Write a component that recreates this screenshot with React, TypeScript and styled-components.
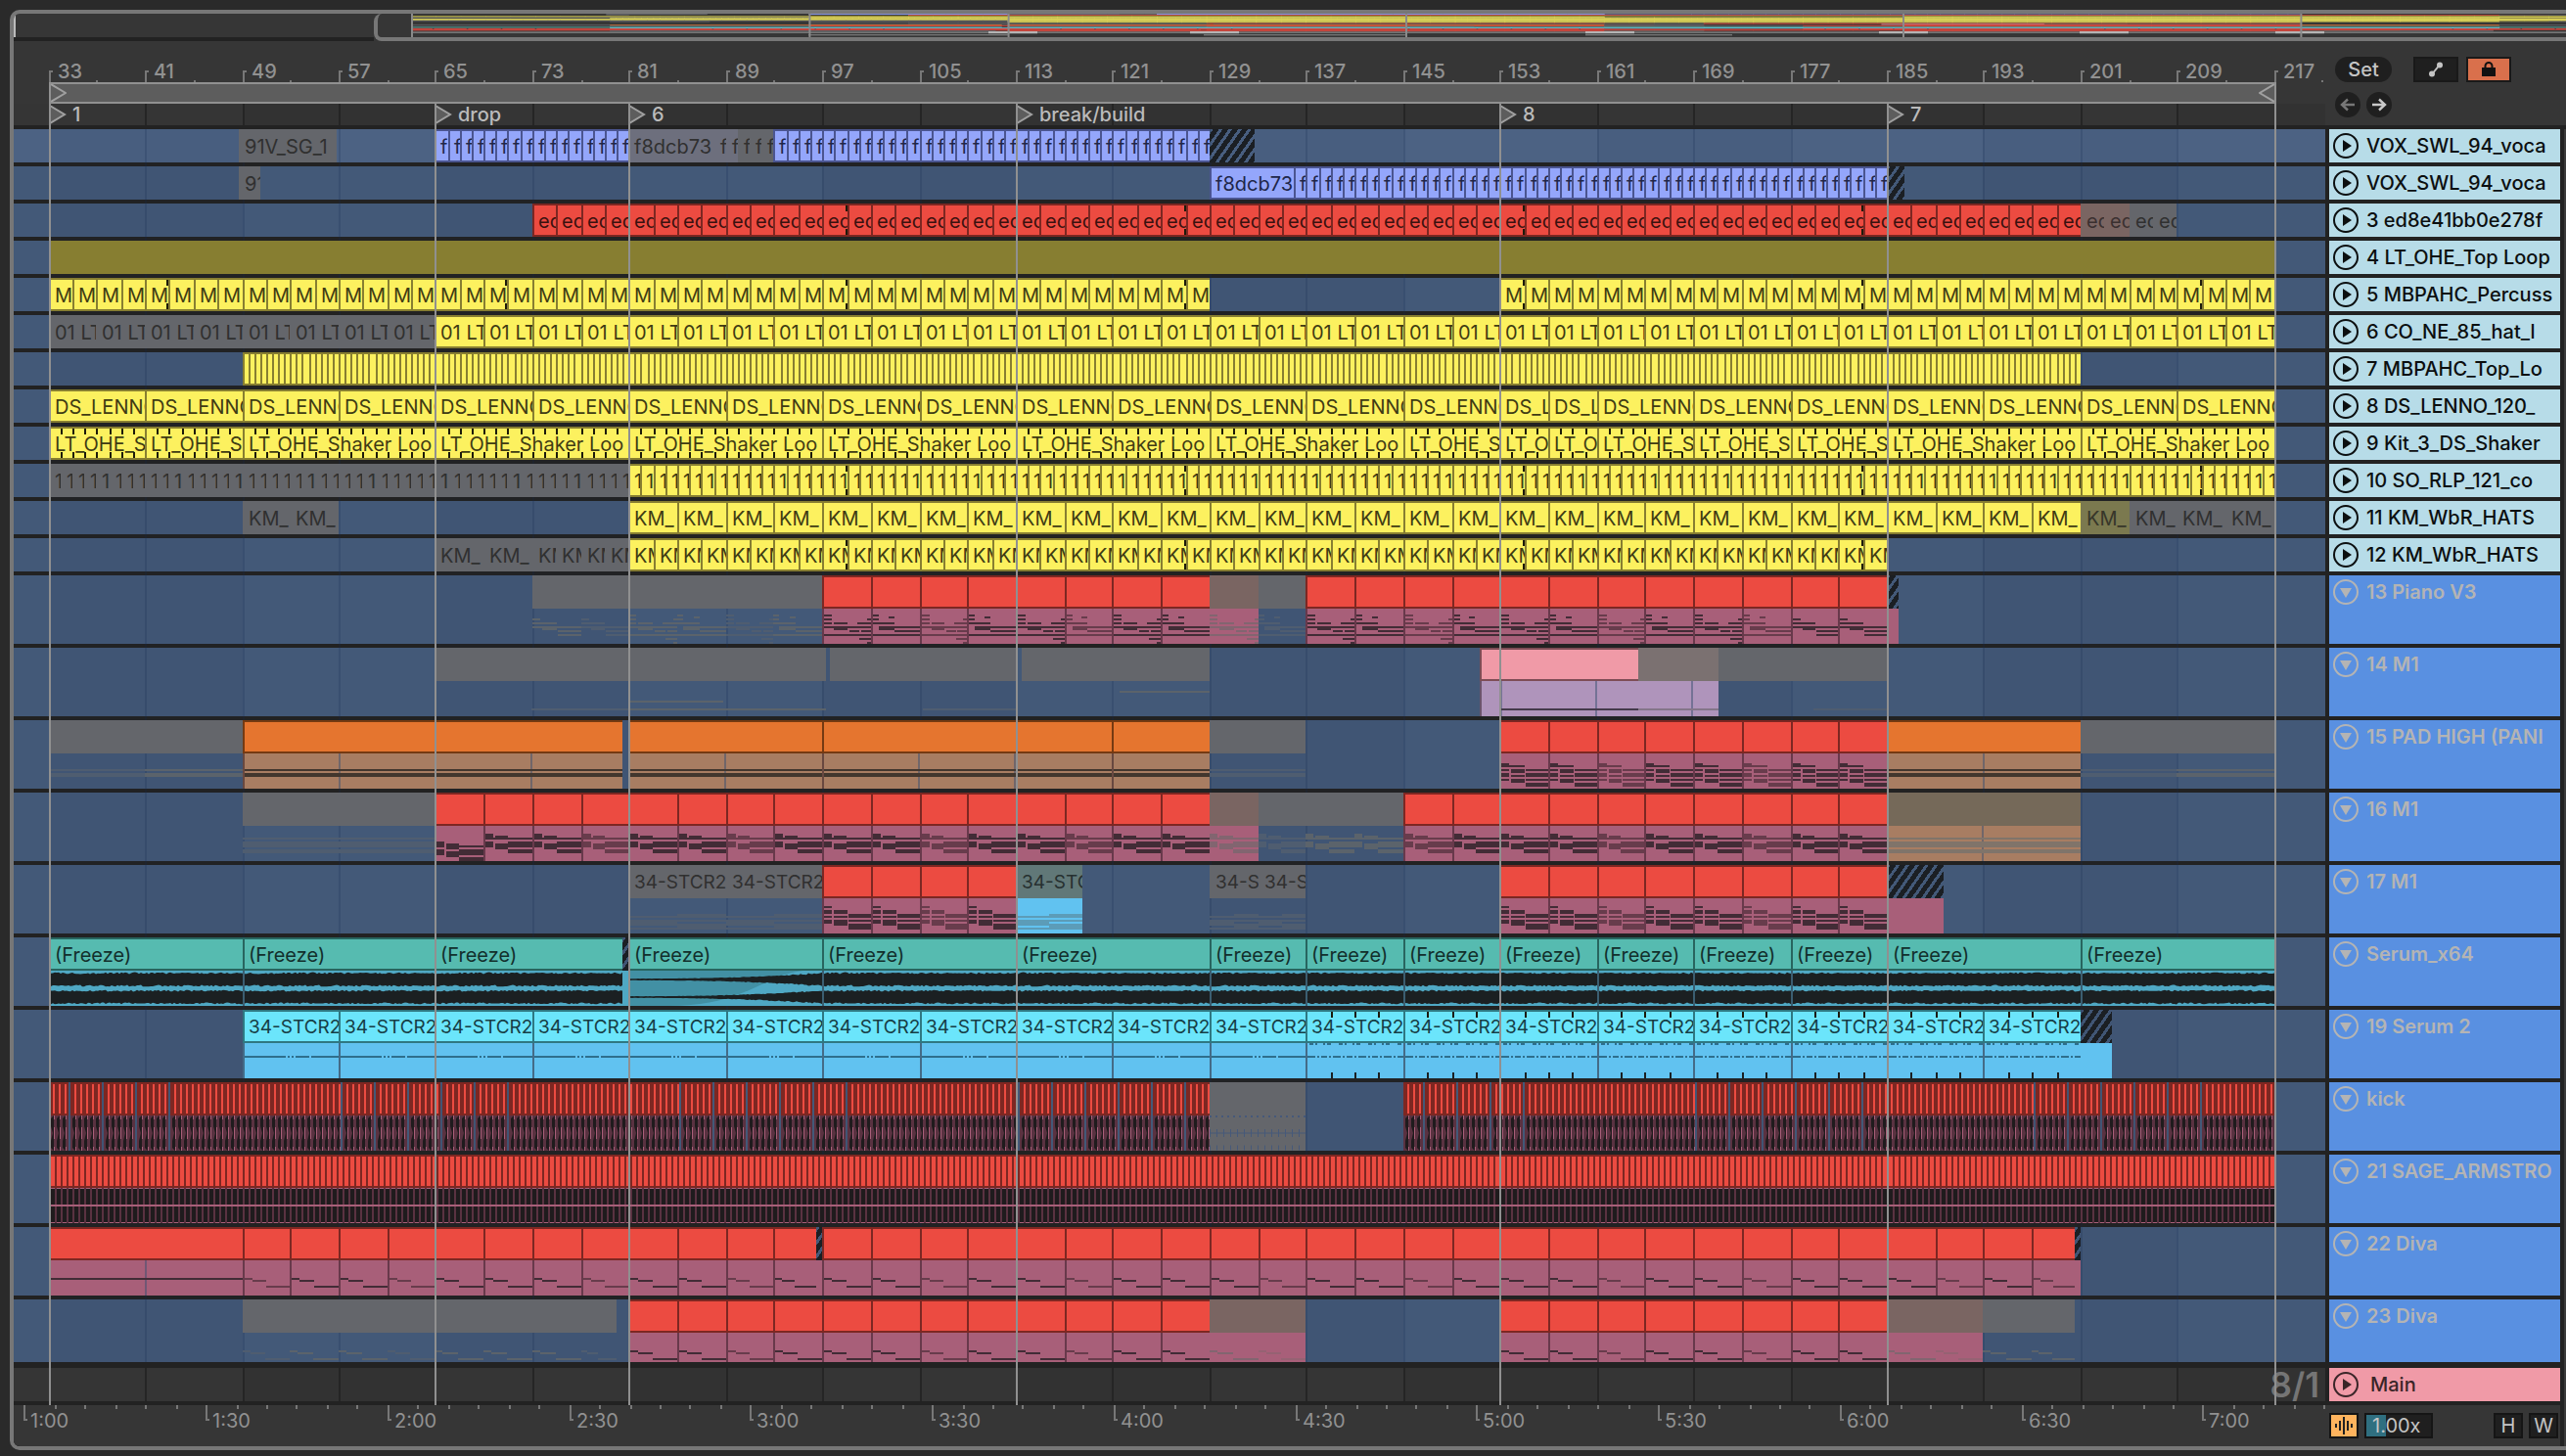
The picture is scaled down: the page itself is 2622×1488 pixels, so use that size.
import React from "react";
import styled, { createGlobalStyle, css } from "styled-components";

/* ---------- palette ---------- */

type Tone = {
  fill: string;
  edge?: string;
  ink: string;
  body?: string;
  note: string;
  faded: string;
};

const tones: Record<string, Tone> = {
  violet: { fill: "#94a6fb", edge: "#4b5590", ink: "#20264a", note: "#20264a", faded: "#20264a" },
  red: { fill: "#ec4b41", edge: "#7d2722", ink: "#3b110f", body: "#a85f79", note: "#422c36", faded: "#683c4c" },
  yellow: { fill: "#fcf15f", edge: "#877e31", ink: "#3f3b13", note: "#3f3b13", faded: "#3f3b13" },
  olive: { fill: "#877e31", ink: "#3f3b13", note: "#3f3b13", faded: "#3f3b13" },
  orange: { fill: "#e5752f", edge: "#753a12", ink: "#3b1d09", body: "#a87d62", note: "#42362d", faded: "#654c41" },
  pink: { fill: "#f09aa7", edge: "#7e4d56", ink: "#3b2226", body: "#af94bb", note: "#443a4b", faded: "#847689" },
  teal: { fill: "#56bbb0", edge: "#28655f", ink: "#122f2c", body: "#4fa8c4", note: "#1b2022", faded: "#1b2022" },
  cyan: { fill: "#6be5fb", edge: "#2f7882", ink: "#163e46", body: "#61c2f0", note: "#2e6f8d", faded: "#2e6f8d" },
  muted: { fill: "#64666b", ink: "#303030", note: "#5b636b", faded: "#4f5d70" },
  mutedViolet: { fill: "#6d6f7d", ink: "#303030", note: "#5b636b", faded: "#5b636b" },
  mutedRed: { fill: "#7a6562", ink: "#3a3030", body: "#a85f79", note: "#826570", faded: "#966273" },
  mutedYellow: { fill: "#7b794f", ink: "#37362a", note: "#5b636b", faded: "#5b636b" },
  mutedPink: { fill: "#7b7171", ink: "#303030", body: "#af94bb", note: "#847689", faded: "#847689" },
  mutedOrange: { fill: "#756959", ink: "#303030", body: "#a87d62", note: "#80746a", faded: "#80746a" },
  mutedCyan: { fill: "#617878", ink: "#263030", body: "#61c2f0", note: "#5c9cb8", faded: "#5c9cb8" },
};

/* ---------- time to pixels ---------- */

const BAR = 12.36;
const FIRST = 36.3;
const at = (bar: number) => 2 * Math.floor((FIRST + BAR * (bar - 33)) / 2);
const span = (a: number, b: number) => at(b) - at(a);

/* ---------- clips ---------- */

type Box = [number, number, number, number];

type ClipData = {
  from: number;
  to: number;
  tone: string;
  label?: string;
  kind?: "hatch" | "wave" | "fadeIn" | "kick" | "hits" | "dots" | "dotsDense";
  notes?: Box[];
  faded?: boolean;
  loopEnd?: boolean;
  marks?: number;
};

const repeat = (from: number, to: number, step: number, tone: string, extra: Partial<ClipData> = {}): ClipData[] => {
  const out: ClipData[] = [];
  for (let b = from; b < to; b += step) {
    out.push({ from: b, to: Math.min(b + step, to), tone, faded: b % 28 === 5 || b % 28 === 21, ...extra });
  }
  return out;
};

const one = (from: number, to: number, tone: string, extra: Partial<ClipData> = {}): ClipData => ({
  from,
  to,
  tone,
  ...extra,
});

const loopEnds = (clips: ClipData[]) => clips.map((c) => ({ ...c, loopEnd: c.to % 28 === 15 && c.to - c.from <= 2 }));

const chordsLow: Box[] = [
  [0, 16, 8, 6], [0, 24, 8, 6], [10, 18, 13, 6], [10, 26, 13, 6],
  [23, 20, 25, 2], [23, 24, 25, 6], [23, 32, 25, 4],
];
const chords: Box[] = [
  [0, 8, 8, 6], [0, 16, 8, 6], [10, 10, 13, 4], [8, 12, 2, 2], [10, 18, 13, 6],
  [23, 12, 25, 2], [23, 16, 25, 6], [23, 24, 25, 4],
];
const pads: Box[] = [
  [0, 10, 8, 4], [0, 16, 8, 2], [0, 20, 8, 4], [0, 26, 8, 2],
  [8, 12, 16, 2], [10, 16, 14, 4], [10, 22, 14, 2], [10, 26, 14, 4],
  [25, 16, 23, 2], [25, 20, 23, 4], [25, 26, 23, 2], [25, 30, 23, 4],
];
const stabs: Box[] = [
  [0, 8, 8, 2], [0, 12, 8, 4], [0, 18, 8, 2], [0, 22, 8, 4],
  [10, 12, 14, 4], [10, 18, 14, 2], [10, 22, 14, 6],
  [25, 16, 23, 4], [25, 22, 23, 2], [25, 26, 23, 6],
];
const pianoA: Box[] = [
  [0, 6, 8, 2], [0, 10, 8, 2], [0, 14, 8, 2], [10, 14, 14, 2], [0, 18, 48, 2], [10, 18, 14, 4],
  [26, 22, 10, 2], [38, 22, 10, 2], [0, 26, 48, 2], [34, 14, 14, 2], [44, 10, 4, 2], [36, 30, 12, 2], [44, 34, 4, 2],
];
const pianoB: Box[] = [
  [0, 6, 6, 2], [0, 10, 6, 2], [16, 8, 6, 2], [0, 14, 22, 2], [6, 18, 16, 4], [22, 18, 26, 2],
  [22, 22, 26, 2], [0, 26, 48, 2],
];
const pianoC: Box[] = [
  [0, 10, 8, 2], [0, 14, 24, 2], [0, 18, 48, 2], [10, 18, 14, 4], [25, 22, 23, 2], [25, 26, 23, 2],
];
const bass: Box[] = [[0, 18, 8, 2], [8, 20, 15, 2], [23, 26, 25, 2]];
const sustain: Box[] = [[0, 16, 48, 2], [0, 20, 48, 4]];
const sustainWide: Box[] = [[0, 12, 48, 2], [0, 16, 48, 6], [0, 24, 48, 4]];
const ghost: Box[] = [
  [0, 18, 24, 2], [0, 22, 24, 6], [0, 30, 24, 2], [24, 16, 24, 4], [24, 22, 24, 2], [24, 26, 24, 6],
];

const piano = (clips: ClipData[]) =>
  clips.map((c, i) => ({ ...c, notes: c.from >= 177 && c.to <= 185 ? pianoC : i % 2 ? pianoB : pianoA }));

const kicks = (from: number, to: number): ClipData[] => {
  const cuts: number[] = [];
  for (let k = 0; k < 7; k++) for (let j = 0; j < 6; j++) cuts.push(29.35 + 28 * k + 2.75 * j);
  const out: ClipData[] = [];
  let start = from;
  cuts.filter((c) => c > from + 0.5 && c < to).forEach((c) => {
    out.push(one(start, c - 0.17, "red", { kind: "kick" }));
    start = c;
  });
  out.push(one(start, to, "red", { kind: "kick" }));
  return out;
};

type Lane = { name: string; tall?: boolean; clips: ClipData[]; selected?: boolean };

const lanes: Lane[] = [
  {
    name: "VOX_SWL_94_voca",
    selected: true,
    clips: [
      one(48.7, 56.8, "muted", { label: "91V_SG_1" }),
      ...repeat(65, 81, 1, "violet", { label: "f" }),
      one(81, 88, "mutedViolet", { label: "f8dcb73" }),
      ...repeat(88, 90, 1, "mutedViolet", { label: "f" }),
      ...repeat(90, 93, 1, "muted", { label: "f" }),
      ...repeat(93, 129, 1, "violet", { label: "f" }),
      one(129, 132.8, "violet", { kind: "hatch" }),
    ],
  },
  {
    name: "VOX_SWL_94_voca",
    clips: [
      one(48.7, 50.5, "muted", { label: "91" }),
      one(129, 136, "violet", { label: "f8dcb73" }),
      ...repeat(136, 185, 1, "violet", { label: "f" }),
      one(185, 186.4, "violet", { kind: "hatch" }),
    ],
  },
  {
    name: "3 ed8e41bb0e278f",
    clips: [
      ...loopEnds(repeat(73, 201, 2, "red", { label: "ed" })),
      ...repeat(201, 205, 2, "mutedRed", { label: "ed" }),
      ...repeat(205, 209, 2, "muted", { label: "ed" }),
    ],
  },
  { name: "4 LT_OHE_Top Loop", clips: [one(33, 217, "olive")] },
  {
    name: "5 MBPAHC_Percuss",
    clips: [
      ...loopEnds(repeat(33, 129, 2, "yellow", { label: "M" })),
      ...loopEnds(repeat(153, 217, 2, "yellow", { label: "M" })),
    ],
  },
  {
    name: "6 CO_NE_85_hat_l",
    clips: [
      ...repeat(33, 65, 4, "muted", { label: "01 LT" }),
      ...repeat(65, 217, 4, "yellow", { label: "01 LT" }),
    ],
  },
  { name: "7 MBPAHC_Top_Lo", clips: repeat(49, 201, 0.5, "yellow") },
  {
    name: "8 DS_LENNO_120_",
    clips: [
      ...repeat(33, 153, 8, "yellow", { label: "DS_LENNO" }),
      ...repeat(153, 161, 4, "yellow", { label: "DS_L" }),
      ...repeat(161, 217, 8, "yellow", { label: "DS_LENNO" }),
    ],
  },
  {
    name: "9 Kit_3_DS_Shaker",
    clips: [
      ...repeat(33, 49, 8, "yellow", { label: "LT_OHE_S", marks: 1 }),
      ...repeat(49, 145, 16, "yellow", { label: "LT_OHE_Shaker Loo", marks: 1 }),
      one(145, 153, "yellow", { label: "LT_OHE_S", marks: 1 }),
      ...repeat(153, 161, 4, "yellow", { label: "LT_O", marks: 1 }),
      ...repeat(161, 185, 8, "yellow", { label: "LT_OHE_S", marks: 1 }),
      ...repeat(185, 217, 16, "yellow", { label: "LT_OHE_Shaker Loo", marks: 1 }),
    ],
  },
  {
    name: "10 SO_RLP_121_co",
    clips: [
      ...repeat(33, 81, 1, "muted", { label: "1" }),
      ...loopEnds(repeat(81, 217, 1, "yellow", { label: "1" })),
    ],
  },
  {
    name: "11 KM_WbR_HATS",
    clips: [
      ...repeat(49, 57, 4, "muted", { label: "KM_" }),
      ...repeat(81, 201, 4, "yellow", { label: "KM_" }),
      one(201, 205, "mutedYellow", { label: "KM_" }),
      ...repeat(205, 217, 4, "muted", { label: "KM_" }),
    ],
  },
  {
    name: "12 KM_WbR_HATS",
    clips: [
      ...repeat(65, 73, 4, "muted", { label: "KM_" }),
      ...repeat(73, 81, 2, "muted", { label: "KM" }),
      ...loopEnds(repeat(81, 185, 2, "yellow", { label: "KM" })),
    ],
  },
  {
    name: "13 Piano V3",
    tall: true,
    clips: [
      ...repeat(73, 81, 4, "muted", { notes: pianoC }),
      ...piano(repeat(81, 97, 4, "muted")),
      ...piano(repeat(97, 129, 4, "red")),
      one(129, 133, "mutedRed", { notes: pianoA }),
      one(133, 137, "muted", { notes: pianoB, faded: true }),
      ...piano(repeat(137, 185, 4, "red")),
      one(185, 186, "red", { kind: "hatch" }),
    ],
  },
  {
    name: "14 M1",
    tall: true,
    clips: [
      one(65, 81, "muted", { notes: [[24, 28, 24, 2]], faded: true }),
      one(81, 97.25, "muted", { notes: [[0, 20, 23, 2], [0, 28, 48, 2]] }),
      one(97.55, 113, "muted", { notes: [[24, 28, 24, 2]], faded: true }),
      one(113.4, 129, "muted", { notes: [[25, 10, 23, 2]] }),
      one(151.3, 164.4, "pink", { notes: [[6, 28, 42, 2]] }),
      one(164.4, 171.1, "mutedPink", { notes: [[0, 28, 48, 2]] }),
      one(171.1, 185, "muted", { notes: [[27, 28, 21, 2]], faded: true }),
    ],
  },
  {
    name: "15 PAD HIGH (PANI",
    tall: true,
    clips: [
      one(33, 41, "muted", { notes: sustain, faded: true }),
      one(41, 49, "muted", { notes: sustain }),
      one(49, 80.5, "orange", { notes: sustain }),
      one(81, 97, "orange", { notes: sustain }),
      one(97, 121, "orange", { notes: sustain }),
      one(121, 129, "orange", { notes: sustain }),
      one(129, 137, "muted", { notes: sustain, faded: true }),
      ...repeat(153, 185, 4, "red", { notes: pads }),
      one(185, 201, "orange", { notes: sustain }),
      one(201, 209, "muted", { notes: sustain, faded: true }),
      one(209, 217, "muted", { notes: sustain }),
    ],
  },
  {
    name: "16 M1",
    tall: true,
    clips: [
      one(49, 65, "muted", { notes: sustainWide, faded: true }),
      one(65, 69, "red", { notes: chordsLow }),
      ...repeat(69, 129, 4, "red", { notes: chords }),
      one(129, 133, "mutedRed", { notes: chords }),
      one(133, 137, "muted", { notes: chords, faded: true }),
      ...repeat(137, 145, 4, "muted", { notes: chords }),
      ...repeat(145, 185, 4, "red", { notes: chords }),
      one(185, 201, "mutedOrange", { notes: sustainWide }),
    ],
  },
  {
    name: "17 M1",
    tall: true,
    clips: [
      ...repeat(81, 97, 8, "muted", { label: "34-STCR2", notes: ghost, faded: true }),
      ...repeat(97, 113, 4, "red", { notes: stabs }),
      one(113, 118.5, "mutedCyan", { label: "34-STC", notes: ghost }),
      ...repeat(129, 137, 4, "muted", { label: "34-S", notes: ghost, faded: true }),
      ...repeat(153, 185, 4, "red", { notes: stabs }),
      one(185, 189.7, "red", { kind: "hatch" }),
    ],
  },
  {
    name: "Serum_x64",
    tall: true,
    clips: [
      one(33, 49, "teal", { label: "(Freeze)", kind: "wave" }),
      one(49, 65, "teal", { label: "(Freeze)", kind: "wave" }),
      one(65, 80.5, "teal", { label: "(Freeze)", kind: "wave" }),
      one(80.5, 81, "teal", { kind: "hatch" }),
      one(81, 97, "teal", { label: "(Freeze)", kind: "fadeIn" }),
      ...repeat(97, 129, 16, "teal", { label: "(Freeze)", kind: "wave" }),
      ...repeat(129, 185, 8, "teal", { label: "(Freeze)", kind: "wave" }),
      ...repeat(185, 217, 16, "teal", { label: "(Freeze)", kind: "wave" }),
    ],
  },
  {
    name: "19 Serum 2",
    tall: true,
    clips: [
      ...repeat(49, 137, 8, "cyan", { label: "34-STCR2", kind: "dots" }),
      ...repeat(137, 201, 8, "cyan", { label: "34-STCR2", kind: "dotsDense", marks: 2 }),
      one(201, 203.6, "cyan", { kind: "hatch" }),
    ],
  },
  {
    name: "kick",
    tall: true,
    clips: [...kicks(33, 129), one(129, 137, "muted", { kind: "kick" }), ...kicks(145, 217)],
  },
  { name: "21 SAGE_ARMSTRO", tall: true, clips: [one(33, 217, "red", { kind: "hits" })] },
  {
    name: "22 Diva",
    tall: true,
    clips: [
      one(33, 49, "red", { notes: [[0, 18, 48, 2]] }),
      ...repeat(49, 93, 4, "red", { notes: bass }),
      one(93, 96.5, "red", { notes: bass }),
      one(96.5, 97, "red", { kind: "hatch" }),
      ...repeat(97, 197, 4, "red", { notes: bass }),
      one(197, 200.5, "red", { notes: bass, faded: true }),
      one(200.5, 201, "red", { kind: "hatch" }),
    ],
  },
  {
    name: "23 Diva",
    tall: true,
    clips: [
      ...repeat(49, 80, 4, "muted", { notes: bass }),
      ...repeat(81, 129, 4, "red", { notes: bass }),
      ...repeat(129, 137, 4, "mutedRed", { notes: bass }),
      ...repeat(153, 185, 4, "red", { notes: bass }),
      ...repeat(185, 193, 4, "mutedRed", { notes: bass }),
      ...repeat(193, 200.5, 4, "muted", { notes: bass }),
    ],
  },
];

const locators = [
  { bar: 33, name: "1" },
  { bar: 65, name: "drop" },
  { bar: 81, name: "6" },
  { bar: 113, name: "break/build" },
  { bar: 153, name: "8" },
  { bar: 185, name: "7" },
];

/* ---------- styled parts ---------- */

const Global = createGlobalStyle`
  * { box-sizing: border-box; }
  body {
    margin: 0;
    background: #2a2a2a;
    color: #919191;
    font: 400 20px/24px Inter, "Liberation Sans", sans-serif;
  }
  button, input { font: inherit; color: inherit; padding: 0; margin: 0; border: 0; }
  svg { display: block; flex: none; }
`;

const Panel = styled.main`
  margin: 10px 0 6px 10px;
  border: 4px solid #777;
  border-right: 0;
  border-radius: 10px 0 0 10px;
  background: #363636;
  overflow: hidden;
`;

const Overview = styled.div`
  display: flex;
  height: 28px;
`;

const OverviewBefore = styled.div`
  flex: 0 0 368px;
  border-bottom: 4px solid #222;
  &::before {
    content: "";
    display: block;
    width: 2px;
    height: 22px;
    margin-top: 2px;
    background: #bbb;
  }
`;

const OverviewWindow = styled.div`
  flex: 1;
  min-width: 0;
  overflow: hidden;
  border: 4px solid #777;
  border-width: 0 0 4px 4px;
  border-radius: 8px 0 0 8px;
  padding-left: 34px;
`;

const Body = styled.div`
  display: flex;
  background: #222;
`;

const Arrangement = styled.section`
  position: relative;
  flex: 1;
  min-width: 0;
  overflow: hidden;
`;

const BarRuler = styled.div`
  display: flex;
  height: 42px;
  background: #363636;
  font-weight: 500;
`;

const RulerCell = styled.div`
  display: flex;
  flex: none;
  align-items: flex-end;
`;

const BarTick = styled.i`
  flex: none;
  width: 4px;
  height: 12px;
  border: solid #777;
  border-width: 2px 0 0 2px;
`;

const BarNumber = styled.span`
  margin-left: 5px;
  line-height: 22px;
`;

const MinorTick = styled.i`
  width: 2px;
  height: 2px;
  background: #777;
`;

const LoopRow = styled.div`
  display: flex;
  height: 22px;
  background: #363636;
`;

const LoopBrace = styled.div`
  display: flex;
  justify-content: space-between;
  align-items: center;
  background: #5d5d5d;
  border: 2px solid #919191;
`;

const DarkRow = styled.div<{ $height: number }>`
  position: relative;
  display: flex;
  height: ${(p) => p.$height}px;
  background: #353535;
  color: #bbb;
  overflow: hidden;
`;

const GridCell = styled.div<{ $line: string; $shade: string }>`
  flex: none;
  border-left: 2px solid ${(p) => p.$line};
  background: ${(p) => p.$shade};
`;

const LocatorFlag = styled.div`
  position: absolute;
  top: 0;
  display: flex;
  align-items: center;
  gap: 6px;
  height: 22px;
  font-weight: 500;
  line-height: 22px;
`;

const Lanes = styled.div`
  position: relative;
  display: flex;
  flex-direction: column;
  gap: 4px;
  padding: 4px 0 6px;
`;

const LaneRow = styled.div<{ $tall?: boolean; $selected?: boolean; $last?: boolean }>`
  display: flex;
  overflow: hidden;
  height: ${(p) => (p.$last ? 64 : p.$tall ? 70 : 34)}px;
  background: ${(p) => (p.$selected ? "#4c6283" : "#435978")};
`;

const LaneGrid = styled.div`
  position: absolute;
  inset: 4px 0 6px;
  display: flex;
  z-index: 1;
  pointer-events: none;
`;

const hatch = css`
  background: repeating-linear-gradient(125deg, transparent 0 3px, #1b1f24 3px 8px);
`;

const ClipBox = styled.div`
  position: relative;
  z-index: 2;
  flex: none;
  overflow: hidden;
`;

const ClipTitle = styled.div<{ $tone: string; $hatch?: boolean; $narrow?: boolean }>`
  position: relative;
  display: flex;
  align-items: center;
  height: 34px;
  padding-top: 2px;
  white-space: nowrap;
  font-size: ${(p) => (p.$narrow ? 19 : 20)}px;
  color: ${(p) => tones[p.$tone].ink};
  ${(p) =>
    p.$hatch
      ? hatch
      : tones[p.$tone].edge
        ? css`
            background: ${tones[p.$tone].fill};
            border: solid ${tones[p.$tone].edge};
            border-width: 2px 0 2px 2px;
            padding-left: 4px;
          `
        : css`
            background: ${tones[p.$tone].fill};
            padding-left: 6px;
          `}
`;

const ClipBody = styled.div<{ $tone: string; $line?: boolean }>`
  height: 36px;
  background: ${(p) => tones[p.$tone].body ?? "transparent"};
  border-left: ${(p) => (p.$line ? "2px solid rgba(40, 20, 30, .5)" : "0")};
`;

const LoopMark = styled.i`
  position: absolute;
  right: 0;
  top: 0;
  bottom: 0;
  width: 2px;
  border: solid #1c1a0a;
  border-width: 6px 0;
`;

const MarkRows = styled.div`
  position: absolute;
  inset: 0;
  display: flex;
  flex-direction: column;
  justify-content: space-between;
`;

const MarkRow = styled.div`
  display: flex;
  height: 6px;
  margin-left: -2px;
  overflow: hidden;
`;

const Mark = styled.i`
  flex: none;
  border-left: 2px solid #1c1a0a;
  &:first-child { border-color: transparent; }
`;

const Stripes = styled.div<{ $kick: boolean }>`
  position: absolute;
  inset: 0 0 0 -2px;
  background: ${(p) =>
    p.$kick
      ? "repeating-linear-gradient(90deg, #7d2722 0 4px, #ec4b41 4px 6px)"
      : "repeating-linear-gradient(90deg, #7d2722 0 2px, #ec4b41 2px 6px)"};
`;

const MarkerLine = styled.i`
  position: absolute;
  top: 64px;
  bottom: 42px;
  width: 2px;
  z-index: 3;
  background: #909090;
`;

const Position = styled.span`
  position: absolute;
  right: 6px;
  top: 0;
  font-size: 35px;
  line-height: 34px;
  font-weight: 600;
  color: #757575;
`;

const TimeRuler = styled.div`
  display: flex;
  height: 42px;
  margin-top: 4px;
  background: #363636;
`;

const TimeCell = styled.div`
  display: flex;
  flex: none;
`;

const TimeTick = styled.i<{ $major: boolean }>`
  flex: none;
  width: ${(p) => (p.$major ? 4 : 2)}px;
  height: ${(p) => (p.$major ? 16 : 4)}px;
  border: solid #777;
  border-width: ${(p) => (p.$major ? "0 0 2px 2px" : "0 0 0 2px")};
`;

const TimeLabel = styled.span`
  margin: 4px 0 0 3px;
`;

const TrackList = styled.aside`
  flex: none;
  width: 236px;
  margin-left: 4px;
`;

const Controls = styled.div`
  display: flex;
  flex-direction: column;
  gap: 10px;
  height: 86px;
  margin: 0 -6px 0 -4px;
  padding: 16px 6px 0 10px;
  background: #363636;
`;

const ControlRow = styled.div`
  display: flex;
  align-items: center;
`;

const PillButton = styled.button`
  width: 58px;
  height: 26px;
  margin-right: 22px;
  border-radius: 13px;
  background: #1f1f1f;
  color: #c4c4c4;
  font-weight: 500;
  line-height: 26px;
`;

const ToolButton = styled.button<{ $on?: boolean }>`
  display: grid;
  place-items: center;
  width: 46px;
  height: 26px;
  margin-right: 8px;
  border: 2px solid #191919;
  background: ${(p) => (p.$on ? "#d9704c" : "#1f1f1f")};
`;

const RoundButton = styled.button`
  display: grid;
  place-items: center;
  width: 26px;
  height: 26px;
  margin-right: 6px;
  border-radius: 50%;
  background: #1f1f1f;
`;

const TrackHeads = styled.div`
  display: flex;
  flex-direction: column;
  gap: 4px;
  padding: 4px 0 6px;
`;

const TrackHead = styled.div<{ $tall?: boolean; $last?: boolean; $main?: boolean }>`
  display: flex;
  align-items: flex-start;
  gap: ${(p) => (p.$main ? 12 : 8)}px;
  height: ${(p) => (p.$last ? 64 : p.$tall ? 70 : 34)}px;
  padding: 4px 0 4px 4px;
  overflow: hidden;
  white-space: nowrap;
  font-weight: ${(p) => (p.$tall ? 600 : 500)};
  line-height: 27px;
  background: ${(p) => (p.$main ? "#f09aa7" : p.$tall ? "#5990e1" : "#b7dce8")};
  color: ${(p) => (p.$main ? "#3a2528" : p.$tall ? "#b4b4b4" : "#0c0f10")};
`;

const FoldButton = styled.button`
  display: block;
  flex: none;
  width: 26px;
  height: 26px;
  background: none;
`;

const StatusBar = styled.div`
  display: flex;
  align-items: flex-start;
  height: 42px;
  margin: 4px -6px 0 -4px;
  padding: 8px 2px 0 4px;
  background: #363636;
  color: #c4c4c4;
`;

const StatusButton = styled.button<{ $on?: boolean }>`
  display: grid;
  place-items: center;
  width: 30px;
  height: 26px;
  margin-right: 6px;
  border: 2px solid #151515;
  background: ${(p) => (p.$on ? "#ffb45e" : "#1f1f1f")};
  line-height: 22px;
`;

const SpeedInput = styled.input`
  width: 70px;
  height: 26px;
  margin-right: auto;
  padding-left: 6px;
  border: 2px solid #151515;
  background: linear-gradient(90deg, #2f6f80 20px, #1f1f1f 20px);
`;

const Edge = styled.div`
  flex: none;
  width: 6px;
  margin-top: 90px;
  border-left: 4px solid #222;
  background: #3a3a3a;
`;

/* ---------- drawings ---------- */

const rnd = (seed: number) => {
  const v = Math.sin(seed * 12.9898) * 43758.5453;
  return v - Math.floor(v);
};

const wavePath = (width: number, mid: number, half: number, seed: number, grow: (t: number) => number) => {
  let top = "";
  let bottom = "";
  for (let x = 0; x <= width; x += 2) {
    const h = half * grow(x / width);
    const j = Math.min(1, h / 6);
    top += `L${x} ${(mid - h - rnd(seed + x) * 2 * j).toFixed(1)}`;
    bottom = `L${x} ${(mid + h + rnd(seed + x + 0.5) * 2 * j).toFixed(1)}` + bottom;
  }
  return "M" + top.slice(1) + bottom + "Z";
};

const Wave = ({ width, seed, fadeIn }: { width: number; seed: number; fadeIn?: boolean }) => {
  const grow = fadeIn ? (t: number) => 0.12 + 0.82 * Math.pow(t, 2.4) : () => 0.92;
  return (
    <svg width={width} height={36} aria-hidden="true">
      {fadeIn && <path d={`M0 0H${width * 0.9}C${width * 0.7} 4 ${width * 0.6} 36 ${width * 0.2} 36H0Z`} fill="#4290a4" />}
      <path d={wavePath(width, 9, 6, seed, grow)} fill="#1b2022" />
      <path d={wavePath(width, 27, 6, seed + 7, grow)} fill="#1b2022" />
    </svg>
  );
};

const Kick = ({ width, muted }: { width: number; muted: boolean }) => {
  const parts: string[] = [];
  for (let x = 2; x < width; x += 6) {
    parts.push(`M${x} 3L${x + 3} 0V36L${x} 33V26L${x + 2} 18L${x} 11Z`);
  }
  return (
    <svg width={width} height={36} aria-hidden="true">
      {muted ? (
        <>
          <rect width={width} height={36} fill="#64666b" />
          <path d={`M0 18H${width}`} stroke="#46597a" strokeWidth={1} />
          <path d={`M0 1H${width}`} stroke="#46597a" strokeWidth={2} strokeDasharray="2 4" />
          <path d={`M0 33H${width}`} stroke="#46597a" strokeWidth={5} strokeDasharray="1 6" />
          <path d={`M0 18H${width}`} stroke="#46597a" strokeWidth={8} strokeDasharray="1 6" />
        </>
      ) : (
        <>
          <rect width={width} height={36} fill="#5a3241" />
          <path d={parts.join("")} fill="#1f1b1d" />
          <path d={`M5 18H${width}`} stroke="#a85f79" strokeWidth={12} strokeDasharray="1 5" />
          <path d={`M5 34H${width}M5 2H${width}`} stroke="#a85f79" strokeWidth={4} strokeDasharray="1 5" />
        </>
      )}
    </svg>
  );
};

const Hits = ({ width }: { width: number }) => (
  <svg width={width} height={36} aria-hidden="true" shapeRendering="crispEdges">
    <rect width={width} height={36} fill="#5a3241" />
    <path d={`M2 9H${width}M2 27H${width}`} stroke="#1f1b1d" strokeWidth={16} strokeDasharray="4 2" />
    <path d={`M0 18H${width}`} stroke="#a85f79" strokeWidth={2} />
    <path d={`M2 .5H${width}M2 35.5H${width}`} stroke="#a85f79" strokeWidth={1} strokeDasharray="4 2" />
  </svg>
);

const Dots = ({ width, ticks }: { width: number; ticks?: number[] }) => (
  <svg width={width} height={36} aria-hidden="true" shapeRendering="crispEdges">
    {ticks ? (
      <>
        <path d={`M2 1H${width}`} stroke="#2e6f8d" strokeWidth={2} strokeDasharray="4 2 2 6 2 2 4 8" />
        <path d={`M0 14H${width}`} stroke="#2e6f8d" strokeWidth={2} strokeDasharray="8 2 2 2 6 2 2 2" />
        {ticks.map((x) => (
          <rect key={x} x={x} y={30} width={2} height={6} fill="#1b2022" />
        ))}
      </>
    ) : (
      <path d={`M0 14H${width}`} stroke="#2e6f8d" strokeWidth={2} strokeDasharray="42 2 2 2 2 2 14 2" />
    )}
  </svg>
);

const Notes = ({ clip, width }: { clip: ClipData; width: number }) => {
  const tone = tones[clip.tone];
  const grid: number[] = [];
  for (let b = 33; b < clip.to; b += 8) if (b > clip.from) grid.push(((b - clip.from) / (clip.to - clip.from)) * 48);
  const px = 96 / width;
  return (
    <svg width={width} height={36} viewBox="0 0 48 36" preserveAspectRatio="none" shapeRendering="crispEdges" aria-hidden="true">
      {tone.body && grid.map((x) => <rect key={x} x={x - px} y={0} width={px} height={36} fill="#3a506f" fillOpacity={0.5} />)}
      {clip.notes!.map(([x, y, w, h], i) => (
        <rect key={i} x={x} y={y} width={w} height={h} fill={clip.faded ? tone.faded : tone.note} />
      ))}
    </svg>
  );
};

const ClipView = ({ clip, previous, tall }: { clip: ClipData; previous: number; tall?: boolean }) => {
  const width = span(clip.from, clip.to);
  const { kind, tone } = clip;
  const striped = kind === "kick" || kind === "hits";
  const lined = !!tones[tone].edge && !striped && kind !== "hatch";
  const inner = lined ? width - 2 : width;
  const markRow: number[] = [];
  const ticks: number[] = [];
  if (clip.marks) {
    for (let b = clip.from; b < clip.to; b += clip.marks) {
      markRow.push(span(b, b + clip.marks));
      if (b > clip.from) ticks.push(span(clip.from, b) - 2);
    }
  }
  return (
    <ClipBox style={{ width, marginLeft: at(clip.from) - previous }}>
      <ClipTitle $tone={tone} $hatch={kind === "hatch"} $narrow={clip.label?.startsWith("34")}>
        {striped && tone === "red" && <Stripes $kick={kind === "kick"} />}
        {clip.label}
        {clip.loopEnd && <LoopMark />}
        {clip.marks && (
          <MarkRows>
            {(tall ? [0] : [0, 1]).map((row) => (
              <MarkRow key={row}>
                {markRow.map((w, i) => (
                  <Mark key={i} style={{ width: w }} />
                ))}
              </MarkRow>
            ))}
          </MarkRows>
        )}
      </ClipTitle>
      {tall && (
        <ClipBody $tone={tone} $line={lined}>
          {clip.notes && <Notes clip={clip} width={inner} />}
          {kind === "wave" && <Wave width={inner} seed={clip.from} />}
          {kind === "fadeIn" && <Wave width={inner} seed={clip.from} fadeIn />}
          {kind === "kick" && <Kick width={inner} muted={tone !== "red"} />}
          {kind === "hits" && <Hits width={inner} />}
          {kind === "dots" && <Dots width={inner} />}
          {kind === "dotsDense" && <Dots width={inner} ticks={ticks} />}
        </ClipBody>
      )}
    </ClipBox>
  );
};

const LaneClips = ({ lane }: { lane: Lane }) => {
  let cursor = 0;
  return (
    <>
      {lane.clips.map((clip, i) => {
        const previous = cursor;
        cursor = at(clip.to);
        return <ClipView key={i} clip={clip} previous={previous} tall={lane.tall} />;
      })}
    </>
  );
};

const Grid = ({ line, shades }: { line: string; shades: [string, string] }) => (
  <>
    <div style={{ flex: "none", width: at(33) }} />
    {Array.from({ length: 24 }, (_, i) => 33 + i * 8).map((bar, i) => (
      <GridCell key={bar} $line={line} $shade={shades[Math.floor(i / 2) % 2]} style={{ width: span(bar, bar + 8) }} />
    ))}
  </>
);

const miniRow = (i: number) => (i < 3 ? i * 0.8 : i < 12 ? 2.6 + (i - 3) * 1.05 : i + 0.8);

const MiniMap = () => (
  <svg width={2460} height={24} viewBox="0 0 2460 32" preserveAspectRatio="none" aria-hidden="true">
    <g opacity=".86">
      {lanes.map((lane, i) =>
        lane.clips
          .filter((c) => c.kind !== "hatch" && c.to - c.from >= 0.5)
          .map((c, j) => (
            <rect
              key={`${i}-${j}`}
              x={(c.from - 33) * 12.7}
              y={miniRow(i)}
              width={(c.to - c.from) * 12.7 + 0.5}
              height={1.4}
              fill={tones[c.tone].fill}
            />
          ))
      )}
    </g>
    <path d="M0 25.5H2460M406 29H610M810 29H1016M1200 29H1350" stroke="#8a8a8a" strokeWidth={1.4} />
    <path d="M590 25.5h50M796 25.5h50M1200 25.5h50M1500 25.5h50M1705 25.5h50M1905 25.5h50" stroke="#b4b4b4" strokeWidth={3} />
    {locators.map((l) => (
      <path key={l.bar} d={`M${(l.bar - 33) * 12.7 + 1} 0V32`} stroke="#8a8a8a" strokeWidth={2} />
    ))}
  </svg>
);

const Flag = () => (
  <svg width={18} height={20} viewBox="0 0 18 20" aria-hidden="true">
    <path d="M1 1L16 10L1 19Z" fill="#5d5d5d" stroke="#a0a0a0" strokeWidth={2} />
  </svg>
);

const HeadIcon = ({ down, color }: { down?: boolean; color: string }) => (
  <svg width={26} height={26} viewBox="0 0 26 26" aria-hidden="true">
    <circle cx={13} cy={13} r={12} fill="none" stroke={color} strokeWidth={2} />
    <path d={down ? "M7 9H19L13 19Z" : "M10 7V19L19 13Z"} fill={color} />
  </svg>
);

const time = (seconds: number) => `${Math.floor(seconds / 60)}:${String(seconds % 60).padStart(2, "0")}`;
const timeAt = (k: number) => 2 * Math.floor((11.6 + 30.92 * k) / 2);

export default function App() {
  const bars = Array.from({ length: 24 }, (_, i) => 33 + i * 8);
  return (
    <>
      <Global />
      <Panel>
        <Overview>
          <OverviewBefore />
          <OverviewWindow>
            <MiniMap />
          </OverviewWindow>
        </Overview>
        <Body>
          <Arrangement>
            <BarRuler style={{ paddingLeft: at(33) }}>
              {bars.map((bar) => (
                <React.Fragment key={bar}>
                  <RulerCell style={{ width: span(bar, bar + 4) }}>
                    <BarTick />
                    <BarNumber>{bar}</BarNumber>
                  </RulerCell>
                  <RulerCell style={{ width: span(bar + 4, bar + 8) }}>
                    <MinorTick />
                  </RulerCell>
                </React.Fragment>
              ))}
            </BarRuler>
            <LoopRow style={{ paddingLeft: at(33) }}>
              <LoopBrace style={{ width: span(33, 217) + 2 }}>
                <svg width={16} height={18} viewBox="0 0 16 18" aria-hidden="true">
                  <path d="M0 0L15 9L0 18" fill="none" stroke="#a0a0a0" strokeWidth={2} />
                </svg>
                <svg width={16} height={18} viewBox="0 0 16 18" aria-hidden="true">
                  <path d="M16 0L1 9L16 18" fill="none" stroke="#a0a0a0" strokeWidth={2} />
                </svg>
              </LoopBrace>
            </LoopRow>
            <DarkRow $height={22}>
              <Grid line="#252525" shades={["#353535", "#323232"]} />
              {locators.map((l) => (
                <LocatorFlag key={l.bar} style={{ left: at(l.bar) }}>
                  <Flag />
                  {l.name}
                </LocatorFlag>
              ))}
            </DarkRow>
            <Lanes>
              {lanes.map((lane, i) => (
                <LaneRow key={i} $tall={lane.tall} $selected={lane.selected} $last={i === lanes.length - 1}>
                  <LaneClips lane={lane} />
                </LaneRow>
              ))}
              <LaneGrid>
                <Grid line="rgba(20, 40, 80, .2)" shades={["rgba(20, 40, 70, .06)", "transparent"]} />
              </LaneGrid>
            </Lanes>
            <DarkRow $height={34}>
              <Grid line="#252525" shades={["#353535", "#323232"]} />
              <Position>8/1</Position>
            </DarkRow>
            <TimeRuler style={{ paddingLeft: timeAt(0) }}>
              {Array.from({ length: 78 }, (_, k) => (
                <TimeCell key={k} style={{ width: timeAt(k + 1) - timeAt(k) }}>
                  <TimeTick $major={k % 6 === 0} />
                  {k % 6 === 0 && <TimeLabel>{time(60 + k * 5)}</TimeLabel>}
                </TimeCell>
              ))}
            </TimeRuler>
            {[...locators.map((l) => l.bar), 217].map((bar) => (
              <MarkerLine key={bar} style={{ left: at(bar) }} />
            ))}
          </Arrangement>
          <TrackList>
            <Controls>
              <ControlRow>
                <PillButton>Set</PillButton>
                <ToolButton aria-label="Automation mode">
                  <svg width={18} height={18} viewBox="0 0 18 18" aria-hidden="true">
                    <path d="M5 14L13 4" stroke="#c4c4c4" strokeWidth={2} />
                    <circle cx={5} cy={13.5} r={3} fill="#c4c4c4" />
                    <circle cx={13} cy={4.5} r={3} fill="#c4c4c4" />
                  </svg>
                </ToolButton>
                <ToolButton $on aria-label="Lock envelopes">
                  <svg width={14} height={16} viewBox="0 0 14 16" aria-hidden="true">
                    <path d="M3.5 7V4.5a3.5 3.5 0 0 1 7 0V7" fill="none" stroke="#111" strokeWidth={2} />
                    <rect x={0} y={6} width={14} height={9} fill="#111" />
                  </svg>
                </ToolButton>
              </ControlRow>
              <ControlRow>
                <RoundButton aria-label="Previous locator">
                  <svg width={16} height={14} viewBox="0 0 16 14" aria-hidden="true">
                    <path d="M15 7H3M8 1.5L2 7L8 12.5" fill="none" stroke="#777" strokeWidth={2.4} />
                  </svg>
                </RoundButton>
                <RoundButton aria-label="Next locator">
                  <svg width={16} height={14} viewBox="0 0 16 14" aria-hidden="true">
                    <path d="M1 7H13M8 1.5L14 7L8 12.5" fill="none" stroke="#c8c8c8" strokeWidth={2.4} />
                  </svg>
                </RoundButton>
              </ControlRow>
            </Controls>
            <TrackHeads>
              {lanes.map((lane, i) => (
                <TrackHead key={i} $tall={lane.tall} $last={i === lanes.length - 1}>
                  <FoldButton aria-label={`Fold ${lane.name}`}>
                    <HeadIcon down={lane.tall} color={lane.tall ? "#b4b4b4" : "#0c0f10"} />
                  </FoldButton>
                  {lane.name}
                </TrackHead>
              ))}
            </TrackHeads>
            <TrackHead $main>
              <FoldButton aria-label="Fold Main">
                <HeadIcon color="#3a2528" />
              </FoldButton>
              Main
            </TrackHead>
            <StatusBar>
              <StatusButton $on aria-label="Scale waveforms">
                <svg width={20} height={18} viewBox="0 0 20 18" aria-hidden="true">
                  <path d="M2 7V11M6 4V14M10 0V18M14 4V14M18 7V11" stroke="#222" strokeWidth={2} />
                </svg>
              </StatusButton>
              <SpeedInput aria-label="Waveform zoom" defaultValue="1.00x" />
              <StatusButton>H</StatusButton>
              <StatusButton>W</StatusButton>
            </StatusBar>
          </TrackList>
          <Edge />
        </Body>
      </Panel>
    </>
  );
}
